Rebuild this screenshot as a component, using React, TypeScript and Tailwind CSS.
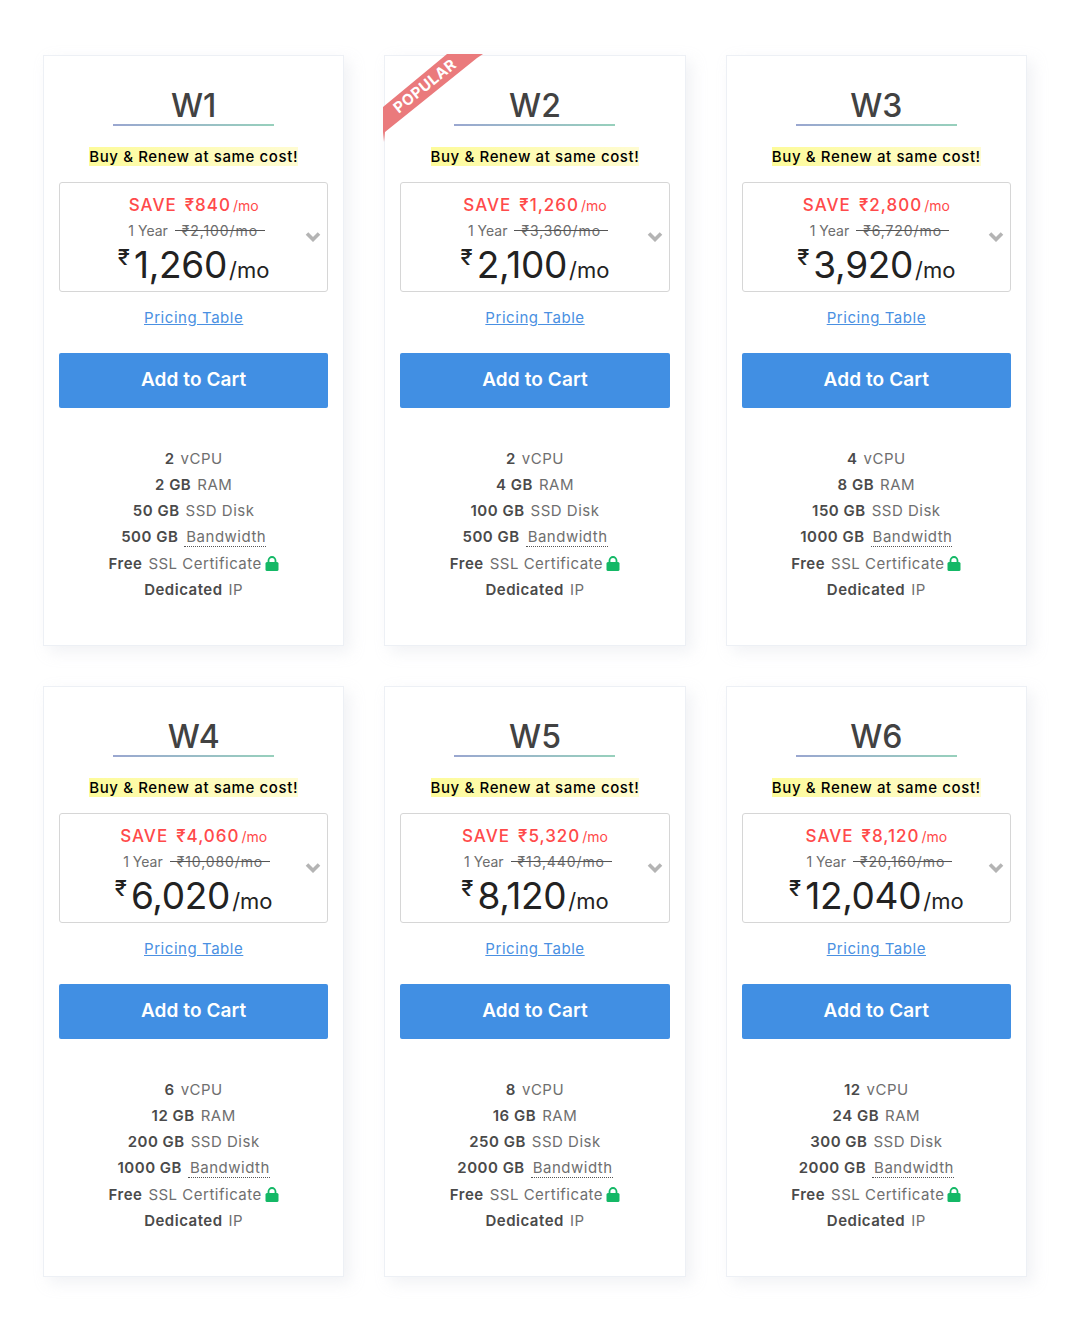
import React from "react";

const plans = [
  { n: "W1", save: "840", old: "2,100", price: "1,260", f: ["2", "2 GB", "50 GB", "500 GB"] },
  { n: "W2", save: "1,260", old: "3,360", price: "2,100", f: ["2", "4 GB", "100 GB", "500 GB"], popular: true },
  { n: "W3", save: "2,800", old: "6,720", price: "3,920", f: ["4", "8 GB", "150 GB", "1000 GB"] },
  { n: "W4", save: "4,060", old: "10,080", price: "6,020", f: ["6", "12 GB", "200 GB", "1000 GB"] },
  { n: "W5", save: "5,320", old: "13,440", price: "8,120", f: ["8", "16 GB", "250 GB", "2000 GB"] },
  { n: "W6", save: "8,120", old: "20,160", price: "12,040", f: ["12", "24 GB", "300 GB", "2000 GB"] },
];

function Row({ b, t, dotted, lock }: { b: string; t: string; dotted?: boolean; lock?: boolean }) {
  return (
    <div className={`flex items-center justify-center text-[15px] tracking-[0.5px] text-[#6f6f6f] ${lock ? "h-[27px] pt-[1px]" : "h-[26px]"}`}>
      <b className="font-semibold text-[#4a4a4a] mr-[6px]">{b}</b>
      <span className={dotted ? "border-b border-dotted border-[#555] leading-[19px] pl-[2px]" : ""}>{t}</span>
      {lock && (
        <svg width="14" height="15" viewBox="0 0 14 15" className="ml-[3px] mb-[1px]">
          <path d="M3.5 7V4.5a3.5 3.5 0 0 1 7 0V7" fill="none" stroke="#14b866" strokeWidth="1.8" />
          <rect x="0.5" y="6" width="13" height="9" rx="1.5" fill="#14b866" />
        </svg>
      )}
    </div>
  );
}

function Card({ p }: { p: (typeof plans)[number] }) {
  return (
    <div className="relative h-[591px] bg-white border border-[#edf0f5] shadow-[6px_6px_14px_rgba(200,205,215,0.25)] px-[15px] pt-[30px] flex flex-col items-stretch">
      {p.popular && (
        <div className="absolute -left-[2px] -top-[2px] w-[104px] h-[90px] overflow-hidden">
          <svg width="104" height="90" viewBox="0 0 104 90" className="absolute left-0 top-0">
            <polygon points="0,53 64,0 100,0 94,4 2,78 1,88 0,78" fill="#ea7a7c" />
          </svg>
          <div className="absolute left-[-3px] top-[24px] w-[90px] text-center text-white font-bold text-[15px] tracking-[0.6px] leading-[16px] -rotate-[39deg]">
            POPULAR
          </div>
        </div>
      )}
      <div className="text-center text-[32px] leading-[40px] font-medium text-[#424242]">{p.n}</div>
      <div className="mx-auto w-[161px] h-[2px] mt-[-2px] bg-gradient-to-r from-[#9aa7d0] to-[#97d0bc]" />
      <div className="flex justify-center mt-[21px]">
        <span className="text-[15px] leading-[19px] font-medium tracking-[0.62px] text-black bg-gradient-to-r from-[#fdfb9a] to-[#fffcd2]">
          Buy &amp; Renew at same cost!
        </span>
      </div>
      <div className="relative mt-[16px] h-[110px] border border-[#d6d6d6] rounded-[3px] flex flex-col items-center">
        <div className="mt-[10px] h-[24px] flex items-baseline text-[#ff4a4a] text-[17px] font-medium tracking-[1px]">
          <span>SAVE</span>
          <span className="ml-[8px]">₹{p.save}</span>
          <span className="text-[14px] tracking-normal ml-[2px] font-normal">/mo</span>
        </div>
        <div className="mt-[1px] pl-[6px] h-[24px] flex items-center text-[14px] text-[#6d6d6d]">
          <span>1 Year</span>
          <span className="ml-[7px] relative px-[7px] tracking-[0.9px]">
            ₹{p.old}/mo
            <span className="absolute left-0 right-0 top-1/2 h-px bg-[#555]" />
          </span>
        </div>
        <div className="h-[44px] mt-[1px] flex items-baseline text-[#222]">
          <span className="text-[22px] font-medium self-start mt-[-2px] mr-[4px]">₹</span>
          <span className="text-[37px] leading-[44px] tracking-[-0.3px]">{p.price}</span>
          <span className="text-[22px] ml-[2px]">/mo</span>
        </div>
        <svg width="16" height="11" viewBox="0 0 16 11" className="absolute right-[6px] top-[48px]">
          <path d="M2 2.5 8 8.5 14 2.5" fill="none" stroke="#b4b4b4" strokeWidth="3.6" />
        </svg>
      </div>
      <div className="text-center mt-[16px] h-[19px] leading-[19px] text-[15px] tracking-[0.55px]">
        <a className="text-[#4a90e2] underline">Pricing Table</a>
      </div>
      <button className="mt-[26px] h-[55px] rounded-[2px] bg-[#418fe3] text-white text-[19px] tracking-[0.1px] font-semibold">Add to Cart</button>
      <div className="mt-[38px]">
        <Row b={p.f[0]} t="vCPU" />
        <Row b={p.f[1]} t="RAM" />
        <Row b={p.f[2]} t="SSD Disk" />
        <Row b={p.f[3]} t="Bandwidth" dotted />
        <Row b="Free" t="SSL Certificate" lock />
        <Row b="Dedicated" t="IP" />
      </div>
    </div>
  );
}

export default function App() {
  return (
    <div className="min-h-[1325px] bg-white px-[43px] pt-[55px] pr-[46px] font-['Inter','DejaVu_Sans',sans-serif]">
      <div className="grid grid-cols-3 gap-x-[40px] gap-y-[40px]">
        {plans.map((p) => (
          <Card key={p.n} p={p} />
        ))}
      </div>
    </div>
  );
}
